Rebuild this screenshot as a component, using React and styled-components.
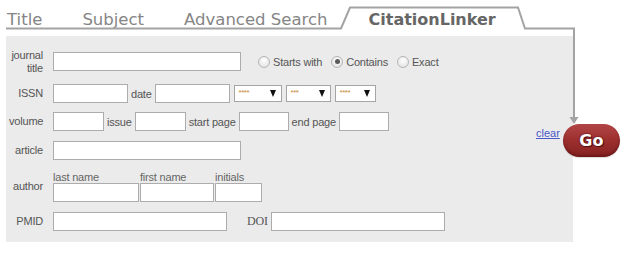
import React from 'react'
import styled, { createGlobalStyle } from 'styled-components'

const GlobalStyle = createGlobalStyle`
    body {
        margin: 0;
        background: #fff;
        font-family: 'Liberation Sans', Arial, sans-serif;
    }
`;

function Radio({ checked, children }) {
    return (
        <RadioOption>
            <RadioDot $checked={checked} />
            <span>{children}</span>
        </RadioOption>
    )
}

function Select({ width, stars }) {
    return (
        <FakeSelect $w={width}>
            <Stars>{stars}</Stars>
            <Arrow />
        </FakeSelect>
    )
}

function App() {
    return (
        <Page>
            <GlobalStyle />
            <TabBar>
                <Tab>Title</Tab>
                <Tab>Subject</Tab>
                <Tab>Advanced Search</Tab>
                <Tab $active>CitationLinker</Tab>
            </TabBar>
            <Outline width="640" height="130" viewBox="0 0 640 130">
                <path d="M6 28.5 H341 L350 7.5 H518 L525 28.5 H574 V118" fill="none" stroke="#a3a3a3" strokeWidth="2" />
                <path d="M569.5 117 H578.5 L574 124 Z" fill="#a3a3a3" />
            </Outline>

            <Panel>
                <Row>
                    <Label>journal<br />title</Label>
                    <Input $w={188} />
                    <Radios>
                        <Radio>Starts with</Radio>
                        <Radio checked>Contains</Radio>
                        <Radio>Exact</Radio>
                    </Radios>
                </Row>
                <Row $mt={13}>
                    <Label>ISSN</Label>
                    <Input $w={75} />
                    <InlineLabel>date</InlineLabel>
                    <Input $w={75} />
                    <Select width={48} stars="****" />
                    <Select width={45} stars="***" />
                    <Select width={41} stars="****" />
                </Row>
                <Row $mt={9}>
                    <Label>volume</Label>
                    <Input $w={51} />
                    <InlineLabel>issue</InlineLabel>
                    <Input $w={51} />
                    <InlineLabel>start page</InlineLabel>
                    <Input $w={50} />
                    <InlineLabel>end page</InlineLabel>
                    <Input $w={50} />
                </Row>
                <Row $mt={10}>
                    <Label>article</Label>
                    <Input $w={188} />
                </Row>
                <Row $mt={11} $h={31}>
                    <Label>author</Label>
                    <Field>
                        <SubLabel>last name</SubLabel>
                        <Input $w={86} />
                    </Field>
                    <Field>
                        <SubLabel>first name</SubLabel>
                        <Input $w={74} />
                    </Field>
                    <Field>
                        <SubLabel>initials</SubLabel>
                        <Input $w={47} />
                    </Field>
                </Row>
                <Row $mt={10}>
                    <Label>PMID</Label>
                    <Input $w={174} />
                    <DoiLabel>DOI</DoiLabel>
                    <Input $w={174} />
                </Row>
            </Panel>

            <Submit>
                <Clear href="#">clear</Clear>
                <GoButton>Go</GoButton>
            </Submit>
        </Page>
    )
}

const Page = styled.div`
    position: relative;
    width: 640px;
    height: 254px;
    overflow: hidden;
`;
const TabBar = styled.div`
    display: flex;
    gap: 40px;
    padding: 10px 0 0 7px;
    height: 20px;
    line-height: 20px;
    font-family: 'DejaVu Sans', Verdana, sans-serif;
    font-size: 16.5px;
`;
const Tab = styled.div`
    color: ${p => p.$active ? '#666' : '#858585'};
    font-weight: ${p => p.$active ? 700 : 400};
    font-size: ${p => p.$active ? '16px' : 'inherit'};
    margin-left: ${p => p.$active ? '1px' : '0'};
    white-space: nowrap;
`;
const Outline = styled.svg`
    position: absolute;
    top: 0;
    left: 0;
`;
const Panel = styled.div`
    box-sizing: border-box;
    width: 567px;
    height: 206px;
    margin: 6px 0 0 6px;
    padding: 16px 0 0 3px;
    background: #ebebeb;
    font-size: 11px;
    letter-spacing: -0.2px;
    color: #555;
`;
const Row = styled.div`
    display: flex;
    align-items: center;
    height: ${p => p.$h || 19}px;
    margin-top: ${p => p.$mt || 0}px;
`;
const Label = styled.div`
    width: 34px;
    margin-right: 10px;
    text-align: right;
    line-height: 13px;
    flex-shrink: 0;
`;
const InlineLabel = styled.span`
    margin: 0 3px;
    white-space: nowrap;
`;
const DoiLabel = styled.span`
    margin: 0 3px 0 20px;
    font-family: 'Liberation Serif', 'Times New Roman', serif;
    font-size: 12px;
`;
const Input = styled.input`
    box-sizing: border-box;
    width: ${p => p.$w}px;
    height: 19px;
    margin: 0;
    padding: 0 3px;
    border: 1px solid #acacac;
    background: #fff;
    flex-shrink: 0;
`;
const Radios = styled.div`
    display: flex;
    align-items: center;
    margin-left: 17px;
    gap: 9px;
`;
const RadioOption = styled.label`
    display: flex;
    align-items: center;
    gap: 3px;
    font-size: 11px;
    color: #555;
    white-space: nowrap;
`;
const RadioDot = styled.span`
    box-sizing: border-box;
    width: 12px;
    height: 12px;
    border-radius: 50%;
    border: 1px solid #b5b5b5;
    background: radial-gradient(circle at 50% 35%, #fff 0%, #e4e4e4 80%);
    display: flex;
    align-items: center;
    justify-content: center;
    &::after {
        content: '';
        display: ${p => p.$checked ? 'block' : 'none'};
        width: 5px;
        height: 5px;
        border-radius: 50%;
        background: #5a5a5a;
    }
`;
const FakeSelect = styled.div`
    box-sizing: border-box;
    width: ${p => p.$w}px;
    height: 17px;
    margin-left: 4px;
    padding: 0 5px 0 4px;
    display: flex;
    align-items: center;
    justify-content: space-between;
    border: 1px solid #a5a5a5;
    background: #fff;
    flex-shrink: 0;
`;
const Stars = styled.span`
    font-size: 8px;
    letter-spacing: -0.5px;
    color: #c8893c;
    margin-top: -3px;
`;
const Arrow = styled.span`
    width: 0;
    height: 0;
    border-left: 3.5px solid transparent;
    border-right: 3.5px solid transparent;
    border-top: 7px solid #111;
`;
const Field = styled.div`
    display: flex;
    flex-direction: column;
    margin-right: 1px;
`;
const SubLabel = styled.span`
    height: 12px;
    line-height: 12px;
    color: #666;
`;
const Submit = styled.div`
    position: absolute;
    left: 536px;
    top: 124px;
    display: flex;
    align-items: center;
    gap: 3px;
`;
const Clear = styled.a`
    font-size: 11px;
    color: #4a58c8;
    text-decoration: underline;
    margin-top: -16px;
`;
const GoButton = styled.button`
    width: 57px;
    height: 33px;
    border: none;
    border-radius: 17px;
    background: linear-gradient(#b24646 0%, #9e3030 45%, #862222 100%);
    box-shadow: inset 0 -2px 3px rgba(60, 0, 0, 0.35), 0 1px 1px rgba(0, 0, 0, 0.15);
    font-family: 'DejaVu Sans', Verdana, sans-serif;
    font-weight: 700;
    font-size: 16px;
    color: #fff;
    text-shadow: 0 0 2px #4a0a0a, 1px 1px 0 #5a1010;
    padding: 0;
    cursor: pointer;
`;

export default App
